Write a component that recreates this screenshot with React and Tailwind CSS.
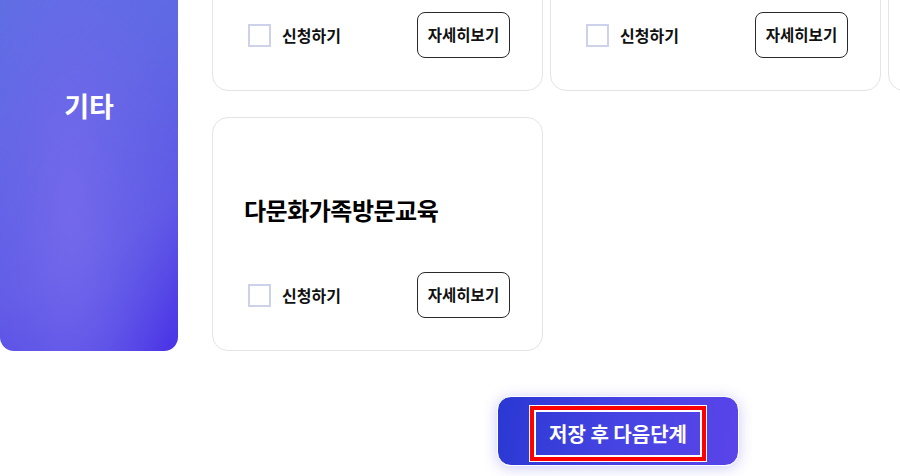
import React, { useState } from "react";

const FONT = { fontFamily: '"Noto Sans CJK KR", "Noto Sans", sans-serif' };

const programs = [
  { id: 1, title: "가족관계향상교육" },
  { id: 2, title: "부모교육" },
  { id: 3, title: "자녀성장지원" },
  { id: 4, title: "다문화가족방문교육" },
];

function ProgramCard({ title, checked, onToggle }) {
  return (
    <div className="flex h-[234px] flex-col rounded-[16px] border border-[#e4e4e7] bg-white pl-[35px] pr-[32px] pt-[77px] pb-[32px]">
      <h3 className="-ml-[4px] text-[24px] font-bold leading-[30px] tracking-[-0.5px] text-black">{title}</h3>
      <div className="mt-auto flex items-center justify-between">
        <label className="flex cursor-pointer items-center gap-[11px]">
          <input type="checkbox" checked={checked} onChange={onToggle} className="peer sr-only" />
          <span className="h-[23px] w-[23px] border-2 border-[#cdd1ea] bg-white peer-checked:bg-[#4f46e5]" />
          <span className="text-[16px] font-bold text-[#111]">신청하기</span>
        </label>
        <button
          type="button"
          className="h-[46px] w-[93px] rounded-[8px] border-[1.5px] border-[#2a2a2a] bg-white text-[15.5px] font-bold text-[#111]"
        >
          자세히보기
        </button>
      </div>
    </div>
  );
}

export default function App() {
  const [picked, setPicked] = useState({});
  const toggle = (id) => setPicked((p) => ({ ...p, [id]: !p[id] }));

  return (
    <div className="h-[476px] w-[900px] overflow-hidden bg-white" style={FONT}>
      <div className="-mt-[143px] flex">
        {/* category side panel */}
        <div className="flex h-[494px] w-[178px] shrink-0 items-center justify-center rounded-[14px] bg-[radial-gradient(ellipse_at_40%_72%,rgba(118,106,236,0.9)_0%,rgba(110,104,234,0.5)_35%,rgba(100,100,230,0)_70%),linear-gradient(150deg,#5a78e0_0%,#6068e4_45%,#5f58e6_75%,#4a33e6_100%)]">
          <span className="mt-[4px] text-[27px] font-bold text-white">기타</span>
        </div>

        <div className="ml-[34px] grid shrink-0 grid-cols-[331px_331px_331px] gap-x-[7px] gap-y-[26px]">
          {programs.map((p) => (
            <ProgramCard key={p.id} title={p.title} checked={!!picked[p.id]} onToggle={() => toggle(p.id)} />
          ))}
        </div>
      </div>

      <div className="pl-[497px] pt-[45px]">
        <button
          type="button"
          className="flex h-[70px] w-[242px] items-center justify-center rounded-[14px] border border-white bg-[linear-gradient(100deg,#2a38d3_0%,#4644e2_50%,#5a44ea_100%)] shadow-[0_2px_14px_rgba(90,80,230,0.3)]"
        >
          <span className="mt-[5px] flex h-[55px] w-[176px] items-center justify-center border-4 border-[#ff0000] text-[20px] font-bold text-white shadow-[inset_0_0_0_2px_#ffffff] outline outline-1 outline-white">
            저장 후 다음단계
          </span>
        </button>
      </div>
    </div>
  );
}
